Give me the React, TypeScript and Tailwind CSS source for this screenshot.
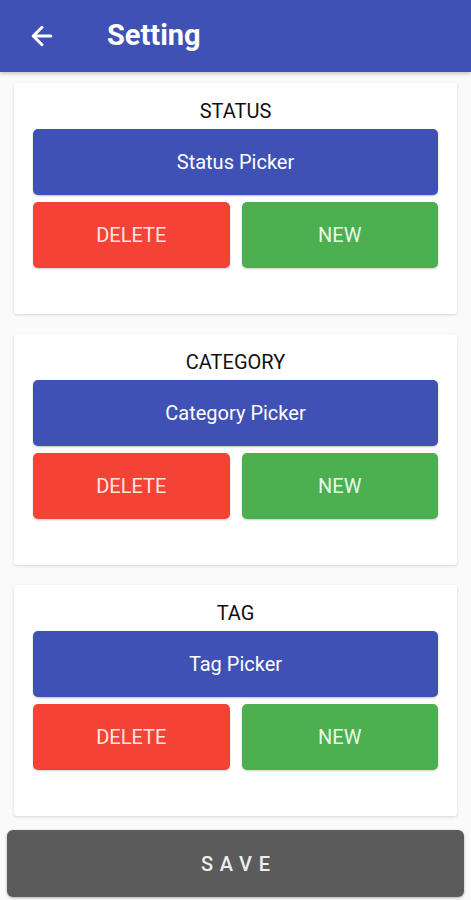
import { ArrowLeft } from "lucide-react";

const Section = ({ title, picker }: { title: string; picker: string }) => {
  return (
    <div className="mx-[14px] bg-white rounded-[3px] shadow-[0_1px_3px_rgba(0,0,0,0.15)] px-[19px] pt-[16px] pb-[46px]">
      <h2 className="text-center text-[20px] leading-[24px] text-[#111] mb-[6px]">
        {title}
      </h2>
      <button className="w-full h-[66px] bg-[#3f51b5] text-white text-[20px] rounded-[5px] shadow-[0_1px_2px_rgba(0,0,0,0.25)]">
        {picker}
      </button>
      <div className="grid grid-cols-2 gap-[12px] mt-[7px]">
        <button className="h-[66px] bg-[#f44336] text-[#fde4e1] text-[20px] rounded-[5px] shadow-[0_1px_2px_rgba(0,0,0,0.2)]">
          DELETE
        </button>
        <button className="h-[66px] bg-[#4caf50] text-[#e8fbe6] text-[20px] rounded-[5px] shadow-[0_1px_2px_rgba(0,0,0,0.2)]">
          NEW
        </button>
      </div>
    </div>
  );
};

export default function App() {
  return (
    <div className="w-[471px] h-[900px] bg-[#fafafa] flex flex-col font-['Roboto',sans-serif] overflow-hidden">
      <header className="h-[72px] bg-[#3f51b5] flex items-center shadow-[0_2px_4px_rgba(0,0,0,0.2)] shrink-0">
        <ArrowLeft className="ml-[27px] text-white" size={30} strokeWidth={2.4} />
        <h1 className="ml-[50px] text-white text-[29px] font-bold">Setting</h1>
      </header>
      <div className="flex flex-col gap-[20px] mt-[11px]">
        <Section title="STATUS" picker="Status Picker" />
        <Section title="CATEGORY" picker="Category Picker" />
        <Section title="TAG" picker="Tag Picker" />
      </div>
      <button className="mx-[7px] mt-[14px] h-[67px] bg-[#5b5b5b] text-[#eee] text-[20px] tracking-[0.34em] pl-[0.34em] font-medium rounded-[6px] shadow-[0_1px_3px_rgba(0,0,0,0.3)]">
        SAVE
      </button>
    </div>
  );
}
